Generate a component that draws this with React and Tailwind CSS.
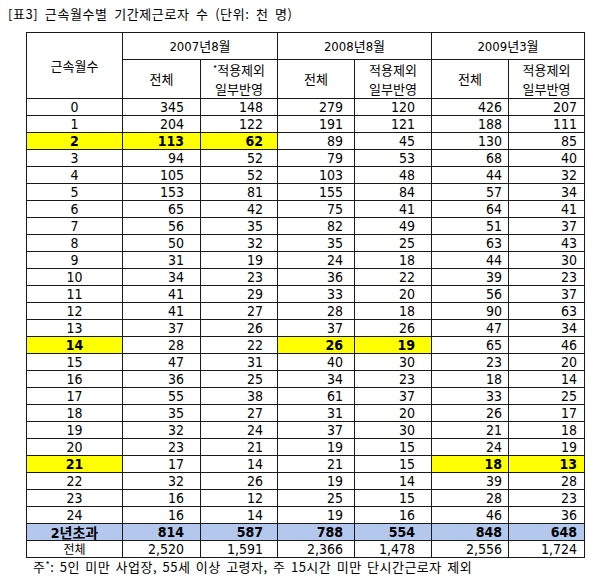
const rows = [
  ['0', 345, 148, 279, 120, 426, 207],
  ['1', 204, 122, 191, 121, 188, 111],
  ['2', 113, 62, 89, 45, 130, 85, 0],
  ['3', 94, 52, 79, 53, 68, 40],
  ['4', 105, 52, 103, 48, 44, 32],
  ['5', 153, 81, 155, 84, 57, 34],
  ['6', 65, 42, 75, 41, 64, 41],
  ['7', 56, 35, 82, 49, 51, 37],
  ['8', 50, 32, 35, 25, 63, 43],
  ['9', 31, 19, 24, 18, 44, 30],
  ['10', 34, 23, 36, 22, 39, 23],
  ['11', 41, 29, 33, 20, 56, 37],
  ['12', 41, 27, 28, 18, 90, 63],
  ['13', 37, 26, 37, 26, 47, 34],
  ['14', 28, 22, 26, 19, 65, 46, 1],
  ['15', 47, 31, 40, 30, 23, 20],
  ['16', 36, 25, 34, 23, 18, 14],
  ['17', 55, 38, 61, 37, 33, 25],
  ['18', 35, 27, 31, 20, 26, 17],
  ['19', 32, 24, 37, 30, 21, 18],
  ['20', 23, 21, 19, 15, 24, 19],
  ['21', 17, 14, 21, 15, 18, 13, 2],
  ['22', 32, 26, 19, 14, 39, 28],
  ['23', 16, 12, 25, 15, 28, 23],
  ['24', 16, 14, 19, 16, 46, 36],
];

// right padding per value column, measured off the picture
const pads = ['pr-[16px]', 'pr-[14px]', 'pr-[11px]', 'pr-[16px]', 'pr-[6px]', 'pr-[7px]'];

const num = { fontFamily: '"Liberation Sans Narrow", "DejaVu Sans Condensed", "Noto Sans CJK KR", sans-serif' };
const kor = { fontFamily: '"Noto Sans CJK KR", "Liberation Sans", sans-serif' };

const cell = 'border border-[#1a1a1a] p-0 h-[17px] leading-none';
const head = 'border border-[#1a1a1a] font-normal text-[13px]';

export default function App() {
  return (
    <div className="w-[598px] h-[584px] bg-white text-black overflow-hidden">
      <div className="pt-[5px] pl-[8px] text-[13px] leading-[18px] tracking-[0.6px] [word-spacing:3px]" style={kor}>
        [표3] 근속월수별 기간제근로자 수 (단위: 천 명)
      </div>

      <table className="ml-[26px] mt-[9px] w-[558px] table-fixed border-collapse text-[14px]" style={num}>
        <colgroup>
          <col className="w-[96px]" />
          <col className="w-[78px]" />
          <col className="w-[77px]" />
          <col className="w-[77px]" />
          <col className="w-[77px]" />
          <col className="w-[77px]" />
          <col className="w-[76px]" />
        </colgroup>
        <thead>
          <tr className="h-[27px]">
            <th rowSpan={2} className={head} style={kor}>
              근속월수
            </th>
            {['2007', '2008', '2009'].map((y, i) => (
              <th key={y} colSpan={2} className={head}>
                {y}<span style={kor}>년</span>{i === 2 ? '3' : '8'}<span style={kor}>월</span>
              </th>
            ))}
          </tr>
          <tr className="h-[38px]">
            {[0, 1, 2].map((i) => [
              <th key={'a' + i} className={head} style={kor}>
                전체
              </th>,
              <th key={'b' + i} className={`${head} leading-[19px]`} style={kor}>
                {i === 0 && <span className="relative -top-[3px] text-[9px] leading-none">*</span>}
                적용제외
                <br />
                일부반영
              </th>,
            ])}
          </tr>
        </thead>
        <tbody>
          {rows.map((r) => {
            const hl = r[7];
            const marked = hl !== undefined;
            return (
              <tr key={r[0]}>
                <td className={`${cell} text-center ${marked ? 'bg-[#ffff00] font-bold' : ''}`}>{r[0]}</td>
                {r.slice(1, 7).map((v, j) => {
                  const on = marked && Math.floor(j / 2) === hl;
                  return (
                    <td key={j} className={`${cell} text-right ${pads[j]} ${on ? 'bg-[#ffff00] font-bold' : ''}`}>
                      {v}
                    </td>
                  );
                })}
              </tr>
            );
          })}
          <tr className="bg-[#b4c7ec] font-bold">
            <td className={`${cell} text-center`}>
              2<span style={kor}>년초과</span>
            </td>
            {[814, 587, 788, 554, 848, 648].map((v, j) => (
              <td key={j} className={`${cell} text-right ${pads[j]}`}>{v}</td>
            ))}
          </tr>
          <tr>
            <td className={`${cell} text-center text-[12px]`} style={kor}>전체</td>
            {['2,520', '1,591', '2,366', '1,478', '2,556', '1,724'].map((v, j) => (
              <td key={j} className={`${cell} text-right ${pads[j]}`}>{v}</td>
            ))}
          </tr>
        </tbody>
      </table>

      <p className="pl-[33px] pt-[1px] text-[13px] leading-[16px] tracking-[0.5px] [word-spacing:2px]" style={kor}>
        주<span className="relative -top-[4px] text-[9px] leading-none">*</span>: 5인 미만 사업장, 55세 이상 고령자, 주 15시간 미만 단시간근로자 제외
      </p>
    </div>
  );
}
